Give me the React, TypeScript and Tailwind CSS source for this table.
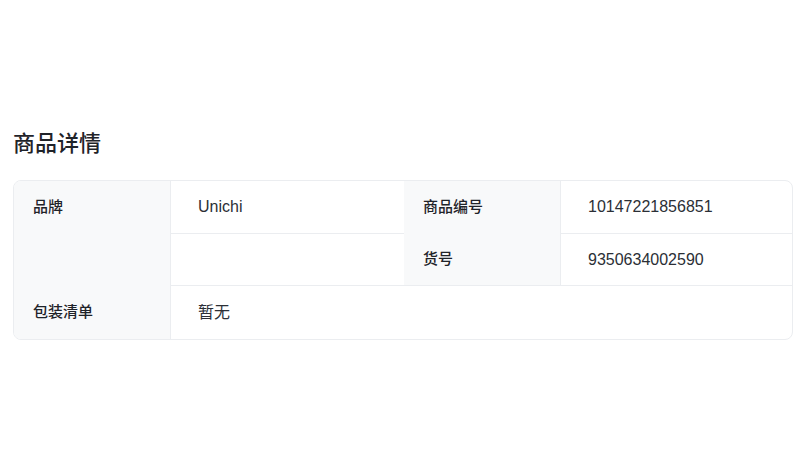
const cjk = { fontFamily: '"Liberation Sans", "Noto Sans CJK SC", sans-serif' };

const label = 'bg-[#f8f9fa] border-r border-[#ebedf0] pl-[19px] text-[15px] font-medium text-[#1f2329] leading-5';
const value = 'pl-[27px] text-[16px] text-[#2b2f36] leading-5 flex items-center';

export default function App() {
  return (
    <div className="w-[806px] h-[474px] bg-white px-[13px] pt-[130px]" style={cjk}>
      <h2 className="text-[22px] leading-[28px] font-medium text-[#1f2329]">商品详情</h2>

      <div className="mt-[22px] border border-[#ebedf0] rounded-lg overflow-hidden grid grid-cols-[157px_233px_157px_1fr] grid-rows-[52px_52px_54px]">
        <div className={`${label} row-span-2 pt-4`}>品牌</div>
        <div className={value}>Unichi</div>
        <div className={`${label} flex items-center pl-[17px]`}>商品编号</div>
        <div className={value}>10147221856851</div>

        <div className={`${value} border-t border-[#ebedf0]`}></div>
        <div className={`${label} flex items-center pl-[17px]`}>货号</div>
        <div className={`${value} border-t border-[#ebedf0]`}>9350634002590</div>

        <div className={`${label} flex items-center`}>包装清单</div>
        <div className={`${value} col-span-3 border-t border-[#ebedf0] text-[15px]`}>暂无</div>
      </div>
    </div>
  );
}
